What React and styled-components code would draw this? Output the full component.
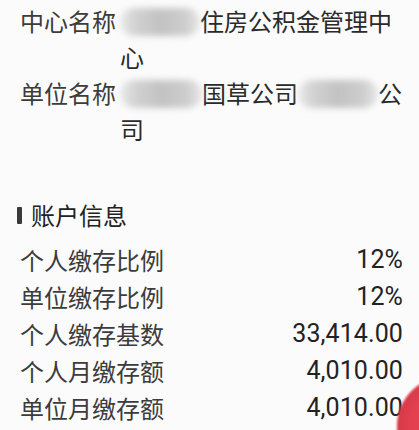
import React from "react";
import styled, { createGlobalStyle } from "styled-components";

const Global = createGlobalStyle`
  html, body { margin: 0; padding: 0; background: #fbfbfb; }
  body { width: 419px; height: 430px; overflow: hidden; }
  #root { position: relative; width: 419px; height: 430px; overflow: hidden; }
`;

const Page = styled.div`
  box-sizing: border-box;
  width: 419px;
  height: 430px;
  padding: 3px 16px 0 20px;
  background: #fbfbfb;
  font-family: "Noto Sans CJK SC", "Noto Sans", sans-serif;
  color: #333;
`;

const InfoRow = styled.div`
  display: flex;
  align-items: flex-start;
  font-size: 24px;
  line-height: 36px;
`;

const InfoLabel = styled.div`
  flex: 0 0 100px;
  color: #3c3c3c;
`;

const InfoValue = styled.div`
  width: 285px;
  color: #2a2a2a;
  word-break: break-all;
`;

const Seg = styled.span``;

const Blur = styled.span`
  display: inline-block;
  width: ${(p) => p.$w}px;
  height: 28px;
  vertical-align: -5px;
  border-radius: 14px;
  background: linear-gradient(
    90deg,
    #e8e8e8 0%,
    #cdcdcd 20%,
    #bdbdbd 50%,
    #c8c8c8 80%,
    #e4e4e4 100%
  );
  filter: blur(3px);
  opacity: 0.9;
`;

const SectionTitle = styled.div`
  display: flex;
  align-items: center;
  gap: 9px;
  margin: 50px 0 8px -3px;
  font-size: 24px;
  line-height: 36px;
  color: #222;
`;

const Bar = styled.span`
  width: 5px;
  height: 17px;
  background: #3a3a3a;
  border-radius: 1px;
`;

const DataRow = styled.div`
  display: flex;
  justify-content: space-between;
  align-items: center;
  height: 37px;
`;

const DataLabel = styled.span`
  font-size: 24px;
  color: #3c3c3c;
`;

const DataValue = styled.span`
  font-family: Roboto, "Noto Sans", sans-serif;
  font-size: 25px;
  color: #222;
  letter-spacing: 0.1px;
`;

const RedBlob = styled.div`
  position: absolute;
  left: 397px;
  top: 376px;
  width: 100px;
  height: 100px;
  border-radius: 50%;
  background: radial-gradient(circle at 55% 50%, #ec4a57 0%, #e2404e 55%, #c8303f 100%);
  filter: blur(1px);
`;

const rows = [
  ["个人缴存比例", "12%"],
  ["单位缴存比例", "12%"],
  ["个人缴存基数", "33,414.00"],
  ["个人月缴存额", "4,010.00"],
  ["单位月缴存额", "4,010.00"],
];

export default function App() {
  return (
    <>
      <Global />
      <Page>
        <InfoRow>
          <InfoLabel>中心名称</InfoLabel>
          <InfoValue>
            <Blur $w={80} />
            <Seg>住房公积金管理中</Seg>
            <Seg>心</Seg>
          </InfoValue>
        </InfoRow>
        <InfoRow>
          <InfoLabel>单位名称</InfoLabel>
          <InfoValue>
            <Blur $w={82} />
            <Seg>国草公司</Seg>
            <Blur $w={80} />
            <Seg>公</Seg>
            <Seg>司</Seg>
          </InfoValue>
        </InfoRow>
        <SectionTitle>
          <Bar />
          账户信息
        </SectionTitle>
        {rows.map(([label, value]) => (
          <DataRow key={label}>
            <DataLabel>{label}</DataLabel>
            <DataValue>{value}</DataValue>
          </DataRow>
        ))}
      </Page>
      <RedBlob />
    </>
  );
}
